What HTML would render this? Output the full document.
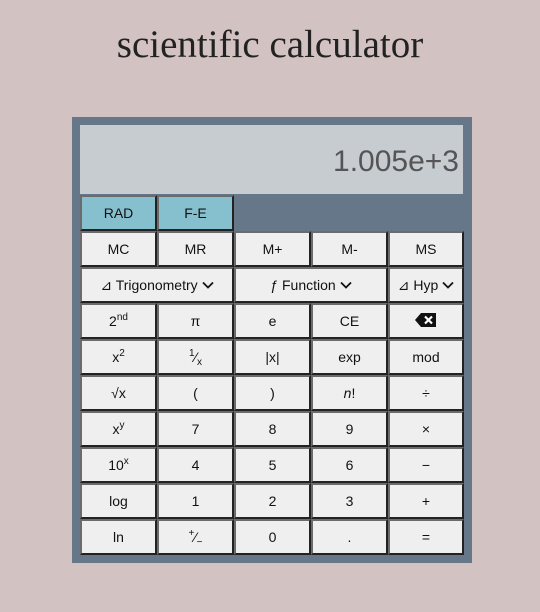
<!DOCTYPE html>
<html><head><meta charset="utf-8"><style>
body{margin:0;width:540px;height:612px;background:#d3c2c2;font-family:"Liberation Sans",sans-serif;position:relative;overflow:hidden}
h1{position:absolute;top:22px;left:0;width:540px;text-align:center;margin:0;font:39px "Liberation Serif",serif;color:#222}
.c{position:absolute;left:72px;top:117px;width:400px;height:446px;background:#657789}
.d{position:absolute;left:8px;top:8px;width:383px;height:69px;background:#c7ccd0;box-sizing:border-box;font-size:30px;color:#555;text-align:right;padding:20px 4px 0 0}
.b{position:absolute;box-sizing:border-box;background:#efefef;border:2px solid;border-color:#6b6b6b #222 #222 #6b6b6b;font-size:14px;color:#111;display:flex;align-items:center;justify-content:center;height:36px}
.b span{display:inline-block;white-space:nowrap;line-height:16px}
.a{background:#86c0cf}
sup{font-size:10px;vertical-align:6px;line-height:0}
sub{font-size:10px;vertical-align:-3px;line-height:0}
</style></head><body>
<h1>scientific calculator</h1>
<div class="c">
<div class="d">1.005e+3</div>
<div class="b a" style="left:8px;top:78px;width:77px">RAD</div>
<div class="b a" style="left:85px;top:78px;width:77px">F-E</div>
<div id="g"></div>
</div>
<script>
var rows=[["MC","MR","M+","M-","MS"],null,["2<sup>nd</sup>","π","e","CE","<svg width='22' height='16' viewBox='0 0 22 16'><path d='M6 1H21V15H6L0 8Z' fill='#111'/><path d='M10 4.5l7 7M17 4.5l-7 7' stroke='#fff' stroke-width='2.2'/></svg>"],
["x<sup>2</sup>","<sup>1</sup>⁄<sub>x</sub>","|x|","exp","mod"],["√x","(",")","<i>n</i>!","÷"],["x<sup>y</sup>","7","8","9","×"],["10<sup>x</sup>","4","5","6","−"],["log","1","2","3","+"],["ln","<sup>+</sup>⁄<sub>−</sub>","0",".","="]];
var h="",xs=[8,85,162,239,316],ws=[77,77,77,77,76];
var chev="<svg width='12' height='8' viewBox='0 0 12 8' style='margin-left:4px'><path d='M1 1.5l5 5 5-5' fill='none' stroke='#111' stroke-width='1.8'/></svg>";
rows.forEach(function(r,i){var t=114+i*36;
if(!r){h+="<div class='b' style='left:8px;top:"+t+"px;width:154px'><span>⊿ Trigonometry</span>"+chev+"</div><div class='b' style='left:162px;top:"+t+"px;width:154px'><span>ƒ Function</span>"+chev+"</div><div class='b' style='left:316px;top:"+t+"px;width:76px'><span>⊿ Hyp</span>"+chev+"</div>";return;}
r.forEach(function(s,j){h+="<div class='b' style='left:"+xs[j]+"px;top:"+t+"px;width:"+ws[j]+"px'><span>"+s+"</span></div>";});});
document.getElementById("g").innerHTML=h;
</script>
</body></html>
